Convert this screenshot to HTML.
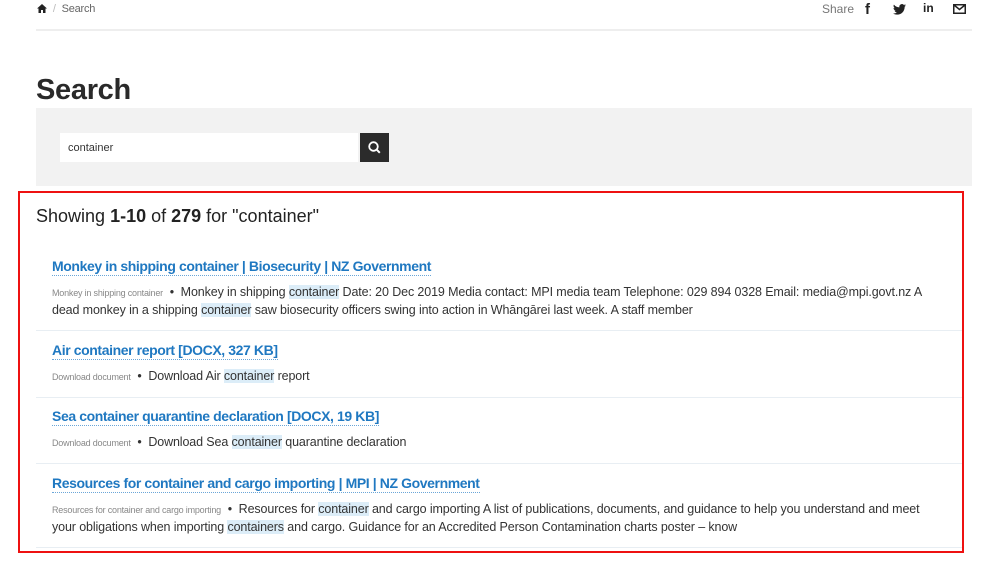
<!DOCTYPE html>
<html><head><meta charset="utf-8">
<style>
*{margin:0;padding:0;box-sizing:border-box}
body{width:990px;height:566px;background:#fff;font-family:"Liberation Sans",sans-serif;color:#333;position:relative;overflow:hidden}
.a{position:absolute;white-space:nowrap}
.crumb{left:37px;top:3px;font-size:11px;color:#666;letter-spacing:-0.2px}
.hr{left:36px;top:29px;width:936px;height:2px;background:#eee}
h1{position:absolute;left:36px;top:74px;font-size:29px;font-weight:bold;color:#2a2a2a;letter-spacing:-0.3px}
.gray{left:36px;top:108px;width:936px;height:78px;background:#f2f2f2}
.inp{left:60px;top:133px;width:298px;height:29px;background:#fff;font-size:11px;color:#333;padding:9px 0 0 8px}
.btn{left:360px;top:133px;width:29px;height:29px;background:#2b2b2b}
.red{left:18px;top:191px;width:946px;height:362px;border:2px solid #e11;}
.show{left:36px;top:206px;font-size:18px;color:#222;letter-spacing:0px}
.t{font-size:14px;font-weight:bold;color:#1f78c1;letter-spacing:-0.4px;border-bottom:1px dotted #6aa6d8;line-height:17px}
.s{font-size:12.5px;color:#333;letter-spacing:-0.12px;line-height:18px}
.sm{font-size:9px;color:#888;letter-spacing:-0.2px}
.h{background:#dcedf8}
.sep{position:absolute;left:36px;width:926px;height:1px;background:#e8eef3}
</style></head><body>
<div class="a crumb"><svg width="10" height="9" viewBox="0 0 10 9" style="vertical-align:-1px"><path d="M5 0L0 4.5h1.5V9h2.5V6h2v3h2.5V4.5H10z" fill="#222"/></svg> <span style="color:#bbb;margin:0 3px">/</span> Search</div>
<div class="a" style="left:822px;top:2px;font-size:12px;color:#777">Share</div>
<div class="a" style="left:865px;top:1px;font-size:15px;font-weight:bold;color:#222">f</div>
<svg class="a" style="left:893px;top:4px" width="13" height="11" viewBox="0 0 24 20"><path d="M24 2.4a10 10 0 0 1-2.8.8A5 5 0 0 0 23.3.4a10 10 0 0 1-3.1 1.2A4.9 4.9 0 0 0 11.8 6 14 14 0 0 1 1.700.9a4.9 4.9 0 0 0 1.5 6.6A4.9 4.9 0 0 1 1 6.9v.1a4.9 4.9 0 0 0 3.9 4.8 5 5 0 0 1-2.2.1 4.9 4.9 0 0 0 4.6 3.4A9.9 9.9 0 0 1 0 17.3 14 14 0 0 0 7.5 19.5c9 0 14-7.5 14-14v-.6A10 10 0 0 0 24 2.4z" fill="#222"/></svg>
<div class="a" style="left:923px;top:1px;font-size:12px;font-weight:bold;color:#222">in</div>
<svg class="a" style="left:953px;top:4px" width="13" height="10" viewBox="0 0 13 10"><rect x=".75" y=".75" width="11.5" height="8.5" fill="none" stroke="#222" stroke-width="1.5"/><path d="M1 1l5.5 4.5L12 1" fill="none" stroke="#222" stroke-width="1.5"/></svg>
<div class="a hr"></div>
<h1>Search</h1>
<div class="a gray"></div>
<div class="a inp">container</div>
<div class="a btn"><svg width="29" height="29" viewBox="0 0 29 29"><circle cx="13.5" cy="13.5" r="4.3" fill="none" stroke="#fff" stroke-width="1.8"/><path d="M16.6 16.6l3.2 3.2" stroke="#fff" stroke-width="2"/></svg></div>
<div class="a red"></div>
<div class="a show">Showing <b>1-10</b> of <b>279</b> for "container"</div>

<div class="a t" style="left:52px;top:258px">Monkey in shipping container | Biosecurity | NZ Government</div>
<div class="a s" style="left:52px;top:283px"><span class="sm">Monkey in shipping container</span> &nbsp;•&nbsp; Monkey in shipping <span class="h">container</span> Date: 20 Dec 2019 Media contact: MPI media team Telephone: 029 894 0328 Email: media@mpi.govt.nz A</div>
<div class="a s" style="left:52px;top:301px">dead monkey in a shipping <span class="h">container</span> saw biosecurity officers swing into action in Whāngārei last week. A staff member</div>
<div class="sep" style="top:330px"></div>

<div class="a t" style="left:52px;top:342px">Air container report [DOCX, 327 KB]</div>
<div class="a s" style="left:52px;top:367px"><span class="sm">Download document</span> &nbsp;•&nbsp; Download Air <span class="h">container</span> report</div>
<div class="sep" style="top:397px"></div>

<div class="a t" style="left:52px;top:408px">Sea container quarantine declaration [DOCX, 19 KB]</div>
<div class="a s" style="left:52px;top:433px"><span class="sm">Download document</span> &nbsp;•&nbsp; Download Sea <span class="h">container</span> quarantine declaration</div>
<div class="sep" style="top:463px"></div>

<div class="a t" style="left:52px;top:475px">Resources for container and cargo importing | MPI | NZ Government</div>
<div class="a s" style="left:52px;top:500px"><span class="sm">Resources for container and cargo importing</span> &nbsp;•&nbsp; Resources for <span class="h">container</span> and cargo importing A list of publications, documents, and guidance to help you understand and meet</div>
<div class="a s" style="left:52px;top:518px">your obligations when importing <span class="h">containers</span> and cargo. Guidance for an Accredited Person Contamination charts poster – know</div>
<div class="sep" style="top:547px"></div>
</body></html>
